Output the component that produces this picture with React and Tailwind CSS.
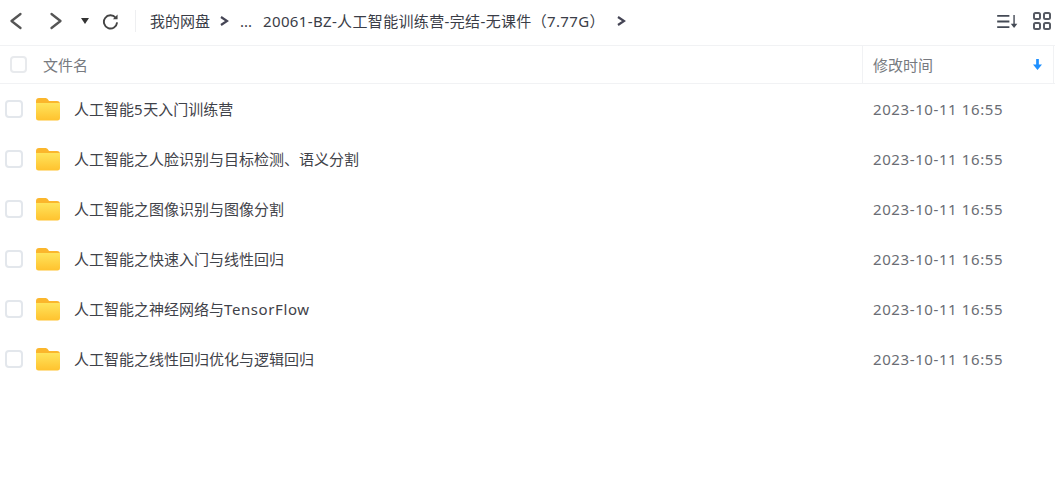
const rows = [
  ['人工智能', <span key="n" className="tracking-[0.6px]">5</span>, '天入门训练营'],
  ['人工智能之人脸识别与目标检测、语义分割'],
  ['人工智能之图像识别与图像分割'],
  ['人工智能之快速入门与线性回归'],
  ['人工智能之神经网络与', <span key="n" className="tracking-[0.6px]">TensorFlow</span>],
  ['人工智能之线性回归优化与逻辑回归'],
];

function Chevron({ dir = 'right', className }) {
  return (
    <svg viewBox="0 0 14 20" className={className} fill="none" stroke="currentColor" strokeWidth="2.300" strokeLinecap="round" strokeLinejoin="round">
      <path d={dir === 'right' ? 'M2.500 3l9 7-9 7' : 'M11.500 3l-9 7 9 7'} />
    </svg>
  );
}

function SmallChevron({ className }) {
  return (
    <svg viewBox="0 0 9 10" className={className} fill="none" stroke="currentColor" strokeWidth="2.2">
      <path d="M1 1l6 4-6 4" />
    </svg>
  );
}

function Folder({ id }) {
  return (
    <svg viewBox="0 0 26 24" className="w-[26px] h-[24px] shrink-0">
      <defs>
        <linearGradient id={id} x1="0" y1="0" x2="0" y2="1">
          <stop offset="0" stopColor="#ffe45c" />
          <stop offset="1" stopColor="#ffc22e" />
        </linearGradient>
      </defs>
      <path d="M1 4c0-1.700 1-3 3-3h6c1.500 0 2.200 .5 3 1.500L14 4h8c2 0 3 1 3 3v1H1z" fill="#fbb62c" />
      <path d="M1 6h24v15c0 1.700-1 2.500-2.500 2.500h-19C2 23.500 1 22.700 1 21z" fill={`url(#${id})`} />
    </svg>
  );
}

export default function App() {
  return (
    <div className="w-[1055px] h-[497px] bg-white overflow-hidden text-[15px] font-['Noto_Sans','Noto_Sans_CJK_SC',sans-serif]">
      {/* toolbar */}
      <div className="h-[46px] flex items-center border-b border-[#f1f2f4] pb-[3px] text-[#3a3d47]">
        <Chevron dir="left" className="w-[14px] h-[20px] ml-[9px] text-[#555]" />
        <Chevron className="w-[14px] h-[20px] ml-[26px] text-[#555]" />
        <span className="ml-[18px] w-0 h-0 border-x-[4px] border-x-transparent border-t-[6px] border-t-[#333]" />
        <svg viewBox="0 0 18 18" className="w-[17px] h-[17px] ml-[13px] text-[#444]" fill="none" stroke="currentColor" strokeWidth="2">
          <path d="M14.500 5A7 7 0 1 0 16 10" />
          <path d="M16.500 1.500v5h-5z" fill="currentColor" strokeWidth="0" />
        </svg>
        <div className="w-px h-[22px] bg-[#eeeff1] ml-[16px]" />
        <span className="ml-[14px]">我的网盘</span>
        <SmallChevron className="w-[9px] h-[10px] ml-[10px] text-[#454555]" />
        <span className="ml-[11px]">...</span>
        <span className="ml-[11px] tracking-[0.35px]">20061-BZ-人工智能训练营-完结-无课件（7.77G）</span>
        <SmallChevron className="w-[9px] h-[10px] ml-[12px] text-[#454555]" />
        <div className="ml-auto flex items-center">
          <svg viewBox="0 0 22 16" className="w-[21px] h-[15px] text-[#444a55]" fill="none" stroke="currentColor" strokeWidth="2">
            <path d="M0 2h13M0 8h13M0 14h13" />
            <path d="M18 1v11" strokeWidth="1.500" />
            <path d="M14.500 10.500h7L18 15z" fill="currentColor" strokeWidth="0" />
          </svg>
          <svg viewBox="0 0 18 18" className="w-[18px] h-[18px] ml-[15px] mr-[4px] text-[#565a63]" fill="none" stroke="currentColor" strokeWidth="2">
            <rect x="1" y="1" width="6" height="6" rx="1.500" />
            <rect x="11" y="1" width="6" height="6" rx="1.500" />
            <rect x="1" y="11" width="6" height="6" rx="1.500" />
            <rect x="11" y="11" width="6" height="6" rx="1.500" />
          </svg>
        </div>
      </div>

      {/* header */}
      <div className="h-[38px] flex items-center border-b border-[#f1f2f4] text-[#777a80]">
        <span className="ml-[10px] w-[17px] h-[17px] rounded-[4px] border-2 border-[#e8eaed]" />
        <span className="ml-[16px] pt-[1px]">文件名</span>
        <div className="ml-auto w-[192px] h-full flex items-center border-x border-[#f1f2f4] pl-[10px] mr-[1px]">
          <span className="pt-[1px]">修改时间</span>
          <svg viewBox="0 0 10 12" className="w-[9px] h-[11px] ml-auto mr-[11px] text-[#1e90ff]" fill="currentColor">
            <path d="M3.500 0h3v6H10L5 12 0 6h3.500z" />
          </svg>
        </div>
      </div>

      {/* rows */}
      {rows.map((name, i) => (
        <div key={i} className="h-[50px] flex items-center text-[#3f4249]">
          <span className="ml-[5px] w-[18px] h-[18px] rounded-[4px] border-2 border-[#e3e7ec] shrink-0" />
          <span className="ml-[12px]"><Folder id={`folder-${i}`} /></span>
          <span className="ml-[13px]">{name}</span>
          <span className="ml-auto w-[182px] text-[#6a6d74] tracking-[0.6px]">2023-10-11 16:55</span>
        </div>
      ))}
    </div>
  );
}
